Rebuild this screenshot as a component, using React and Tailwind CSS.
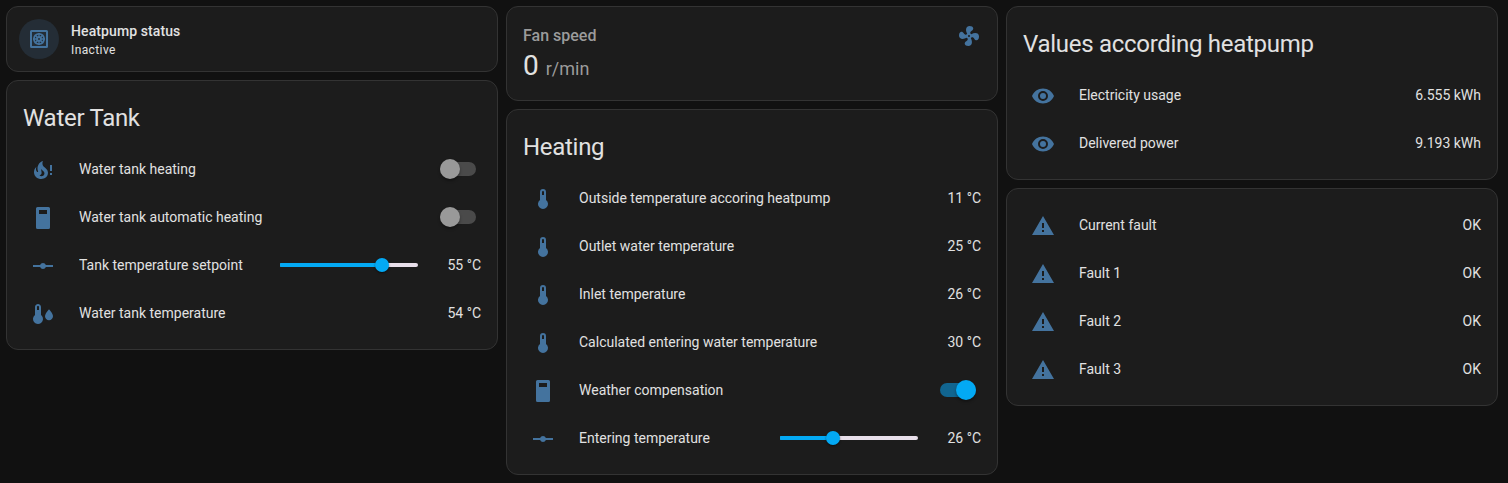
const P = {
  fire: "M17.66 11.2C17.43 10.9 17.15 10.64 16.89 10.38C16.22 9.78 15.46 9.35 14.82 8.72C13.33 7.26 13 4.85 13.95 3C13 3.23 12.17 3.75 11.46 4.32C8.87 6.4 7.85 10.07 9.07 13.22C9.11 13.32 9.15 13.42 9.15 13.55C9.15 13.77 9 13.97 8.8 14.05C8.57 14.15 8.33 14.09 8.14 13.93C8.08 13.88 8.04 13.83 8 13.76C6.87 12.33 6.69 10.28 7.45 8.64C5.78 10 4.87 12.3 5 14.47C5.06 14.97 5.12 15.47 5.29 15.97C5.43 16.57 5.7 17.17 6 17.7C7.08 19.43 8.95 20.67 10.96 20.92C13.1 21.19 15.39 20.8 17.03 19.32C18.86 17.66 19.5 15 18.56 12.72L18.43 12.46C18.22 12 17.66 11.2 17.66 11.2M14.5 17.5C14.22 17.74 13.76 18 13.4 18.1C12.28 18.5 11.16 17.94 10.5 17.28C11.69 17 12.4 16.12 12.61 15.23C12.78 14.43 12.46 13.77 12.33 13C12.21 12.26 12.23 11.63 12.5 10.94C12.69 11.32 12.89 11.7 13.13 12C13.9 13 15.11 13.44 15.37 14.8C15.41 14.94 15.43 15.08 15.43 15.23C15.46 16.05 15.1 16.95 14.5 17.5H14.5Z",
  boiler: "M6.5 1H17.5A1.5 1.5 0 0 1 19 2.5V21.5A1.5 1.5 0 0 1 17.5 23H6.5A1.5 1.5 0 0 1 5 21.5V2.5A1.5 1.5 0 0 1 6.5 1M8 4V8H16V4Z",
  ray: "M2,11H9.17C9.58,9.83 10.69,9 12,9C13.31,9 14.42,9.83 14.83,11H22V13H14.83C14.42,14.17 13.31,15 12,15C10.69,15 9.58,14.17 9.17,13H2V11Z",
  thermometer: "M15 13V5A3 3 0 0 0 9 5V13A5 5 0 1 0 15 13M12 4A1 1 0 0 1 13 5V8H11V5A1 1 0 0 1 12 4Z",
  thermoWater: "M10 13V5C10 3.34 8.66 2 7 2S4 3.34 4 5V13C1.79 14.66 1.34 17.79 3 20S7.79 22.66 10 21 12.66 16.21 11 14C10.72 13.62 10.38 13.28 10 13M7 4C7.55 4 8 4.45 8 5V8H6V5C6 4.45 6.45 4 7 4M18 7.25C18 7.25 22 11.6 22 14.25C22 16.46 20.21 18.25 18 18.25S14 16.46 14 14.25C14 11.6 18 7.25 18 7.25Z",
  fan: "M12,11A1,1 0 0,0 11,12A1,1 0 0,0 12,13A1,1 0 0,0 13,12A1,1 0 0,0 12,11M12.5,2C17,2 17.11,5.57 14.75,6.75C13.76,7.24 13.32,8.29 13.13,9.22C13.61,9.42 14.03,9.73 14.35,10.13C18.05,8.13 22.03,8.92 22.03,12.5C22.03,17 18.46,17.1 17.28,14.73C16.78,13.74 15.72,13.3 14.79,13.11C14.59,13.59 14.28,14 13.88,14.34C15.87,18.03 15.08,22 11.5,22C7,22 6.91,18.42 9.27,17.24C10.25,16.75 10.69,15.71 10.89,14.79C10.4,14.59 9.97,14.27 9.65,13.87C5.96,15.85 2,15.07 2,11.5C2,7 5.56,6.89 6.74,9.26C7.24,10.25 8.29,10.68 9.22,10.87C9.41,10.39 9.73,9.97 10.14,9.65C8.15,5.96 8.94,2 12.5,2Z",
  eye: "M12,9A3,3 0 0,0 9,12A3,3 0 0,0 12,15A3,3 0 0,0 15,12A3,3 0 0,0 12,9M12,17A5,5 0 0,1 7,12A5,5 0 0,1 12,7A5,5 0 0,1 17,12A5,5 0 0,1 12,17M12,4.5C7,4.5 2.73,7.61 1,12C2.73,16.39 7,19.5 12,19.5C17,19.5 21.27,16.39 23,12C21.27,7.61 17,4.5 12,4.5Z",
  alert: "M13 14H11V9H13M13 18H11V16H13M1 21H23L12 2L1 21Z",
};

function Svg({ children }) {
  return (
    <svg viewBox="0 0 24 24" className="block size-6 shrink-0 fill-[#44739e]">
      {children}
    </svg>
  );
}

function Icon({ name }) {
  if (name === "fire")
    return (
      <Svg>
        <path d={P.fire} transform="translate(-2 0)" />
        <path d="M19 7H21V13H19ZM19 15H21V17H19Z" />
      </Svg>
    );
  return (
    <Svg>
      <path fillRule="evenodd" d={P[name]} />
    </Svg>
  );
}

function HeatPumpIcon() {
  return (
    <Svg>
      <path
        fillRule="evenodd"
        d="M4.5 3H19.5A1.5 1.5 0 0 1 21 4.5V19.5A1.5 1.5 0 0 1 19.5 21H4.5A1.5 1.5 0 0 1 3 19.5V4.5A1.5 1.5 0 0 1 4.5 3M5 5V19H19V5Z"
      />
      <g className="fill-none stroke-[#44739e]">
        <circle cx="12" cy="12" r="5.1" strokeWidth="1.8" />
        <circle cx="12" cy="12" r="2" strokeWidth="2" />
        <path
          strokeWidth="1.3"
          d="M12 6V9.5M12 14.5V18M6 12H9.5M14.5 12H18M7.8 7.8L10.2 10.2M13.8 13.8L16.2 16.2M7.8 16.2L10.2 13.8M13.8 10.2L16.2 7.8"
        />
      </g>
    </Svg>
  );
}

function Card({ className = "", children }) {
  return (
    <section className={`rounded-xl border border-[#333333] bg-[#1c1c1c] ${className}`}>
      {children}
    </section>
  );
}

function Title({ children }) {
  return <h2 className="mb-[2px] px-4 pt-[13px] text-2xl leading-[48px] tracking-[-0.012em]">{children}</h2>;
}

function Row({ icon, label, children }) {
  return (
    <div className="flex h-10 items-center">
      <div className="flex w-10 shrink-0 justify-center pt-[2px]">
        <Icon name={icon} />
      </div>
      <div className="ml-4 flex-1 truncate">{label}</div>
      {children}
    </div>
  );
}

function Rows({ className = "", children }) {
  return <div className={`flex flex-col gap-2 px-4 pb-4 ${className}`}>{children}</div>;
}

function Toggle({ on }) {
  return (
    <div
      className={`relative mr-[5px] h-3.5 w-9 rounded-full ${on ? "bg-[#116590]" : "bg-[#4a4a4a]"}`}
    >
      <div
        className={`absolute -top-[3px] size-5 rounded-full shadow-[0_2px_3px_rgba(0,0,0,0.35)] ${
          on ? "right-0 bg-[#03a9f4]" : "left-0 bg-[#999999]"
        }`}
      />
    </div>
  );
}

function Slider({ percent, value }) {
  return (
    <>
      <div className="relative h-1 w-[138px] rounded-xs bg-[#e8dfea]">
        <div className="h-1 rounded-l-[1px] bg-[#03a9f4]" style={{ width: `${percent}%` }} />
        <div
          className="absolute -top-[5px] size-3.5 -translate-x-1/2 rounded-full bg-[#03a9f4] shadow-[0_1px_2px_rgba(0,0,0,0.5)]"
          style={{ left: `${percent}%` }}
        />
      </div>
      <div className="w-[63px] text-right">{value}</div>
    </>
  );
}

const heating = [
  ["Outside temperature accoring heatpump", "11 °C"],
  ["Outlet water temperature", "25 °C"],
  ["Inlet temperature", "26 °C"],
  ["Calculated entering water temperature", "30 °C"],
];
const faults = ["Current fault", "Fault 1", "Fault 2", "Fault 3"];

export default function App() {
  return (
    <main className="flex h-[483px] items-start gap-2 overflow-hidden bg-[#111111] px-1.5 pt-1.5 font-['Roboto',sans-serif] text-sm leading-5 text-[#e1e1e1]">
      <div className="flex w-[492px] flex-col gap-2">
        <Card className="flex h-[66px] items-center px-3">
          <div className="flex size-10 items-center justify-center rounded-full bg-[#242d36]">
            <HeatPumpIcon />
          </div>
          <div className="ml-3">
            <div className="font-medium tracking-[0.1px]">Heatpump status</div>
            <div className="pt-px text-xs leading-[15px] tracking-[0.4px]">
              <span className="relative top-px">Inactive</span>
            </div>
          </div>
        </Card>
        <Card className="h-[270px]">
          <Title>Water Tank</Title>
          <Rows className="pt-[5px]">
            <Row icon="fire" label="Water tank heating"><Toggle /></Row>
            <Row icon="boiler" label="Water tank automatic heating"><Toggle /></Row>
            <Row icon="ray" label="Tank temperature setpoint"><Slider percent={74} value="55 °C" /></Row>
            <Row icon="thermoWater" label="Water tank temperature">54 °C</Row>
          </Rows>
        </Card>
      </div>

      <div className="flex w-[492px] flex-col gap-2">
        <Card className="flex h-[95px] justify-between px-4">
          <div>
            <div className="mt-[9px] text-base leading-10 font-medium text-[#9b9b9b]">Fan speed</div>
            <div className="-mt-1 flex items-baseline">
              <span className="text-[28px] leading-7">0</span>
              <span className="ml-[7px] text-lg leading-7 text-[#9b9b9b]">r/min</span>
            </div>
          </div>
          <div className="pt-[17px]">
            <Icon name="fan" />
          </div>
        </Card>
        <Card className="h-[366px]">
          <Title>Heating</Title>
          <Rows className="pt-[5px]">
            {heating.map(([label, value]) => (
              <Row key={label} icon="thermometer" label={label}>{value}</Row>
            ))}
            <Row icon="boiler" label="Weather compensation"><Toggle on /></Row>
            <Row icon="ray" label="Entering temperature"><Slider percent={38.5} value="26 °C" /></Row>
          </Rows>
        </Card>
      </div>

      <div className="flex w-[492px] flex-col gap-2">
        <Card className="h-[174px]">
          <Title>Values according heatpump</Title>
          <Rows className="pt-[5px]">
            <Row icon="eye" label="Electricity usage">6.555 kWh</Row>
            <Row icon="eye" label="Delivered power">9.193 kWh</Row>
          </Rows>
        </Card>
        <Card className="h-[218px]">
          <Rows className="pt-4">
            {faults.map((f) => (
              <Row key={f} icon="alert" label={f}>OK</Row>
            ))}
          </Rows>
        </Card>
      </div>
    </main>
  );
}
